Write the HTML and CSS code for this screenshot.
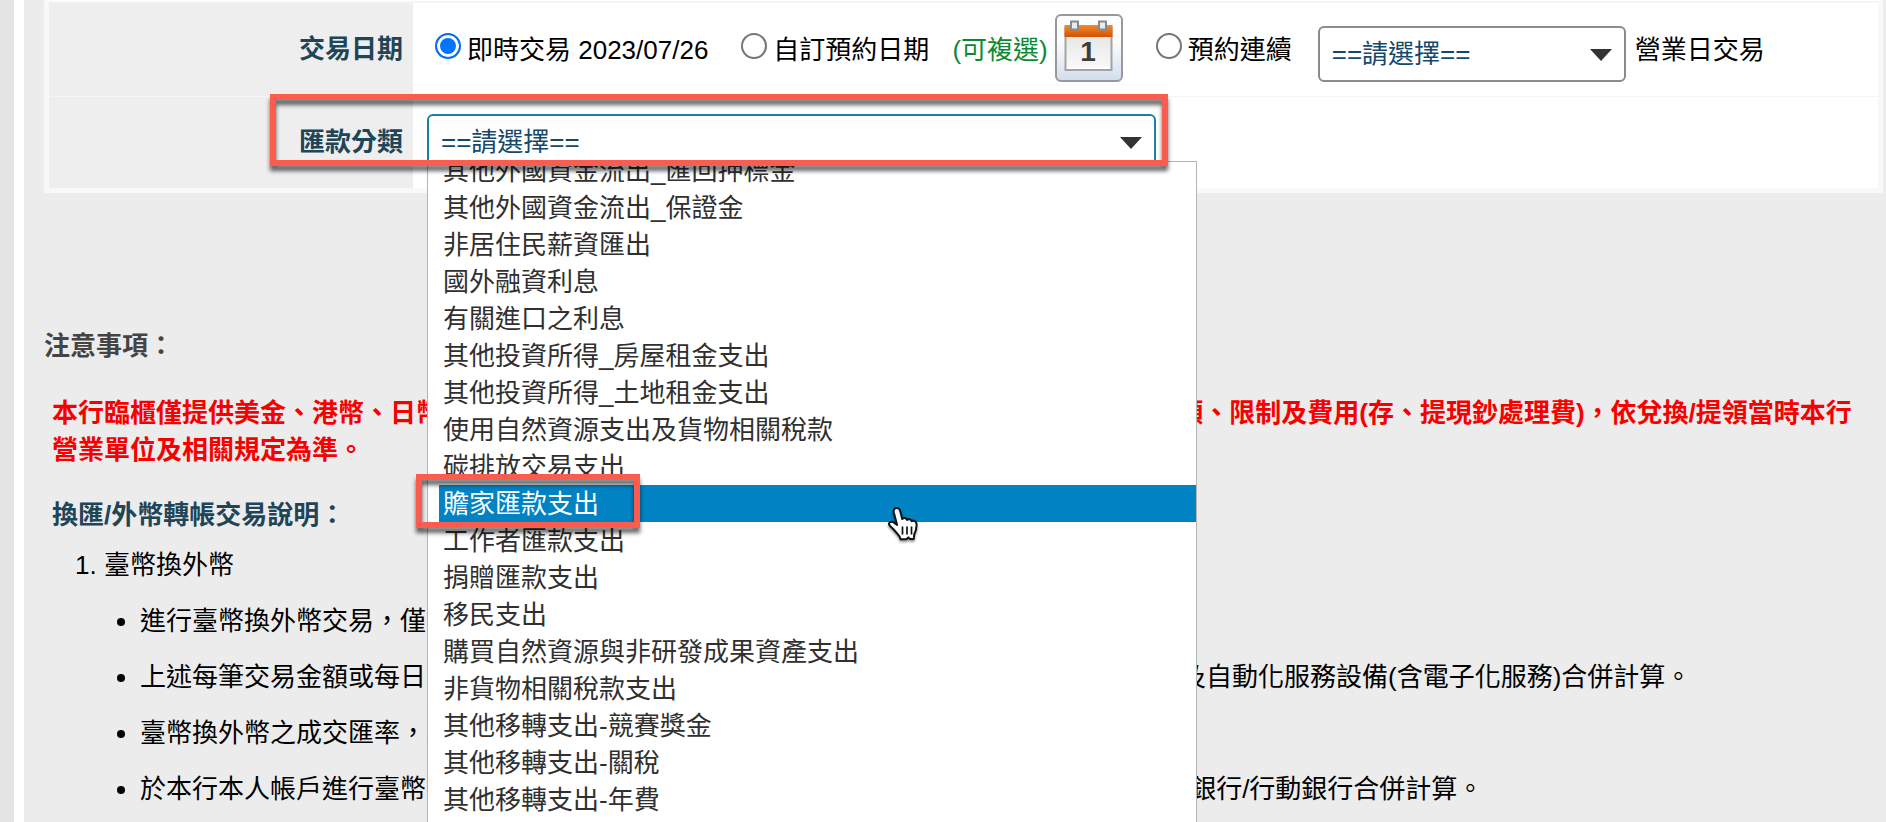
FILE: index.html
```html
<!DOCTYPE html>
<html lang="zh-Hant">
<head>
  <meta charset="UTF-8">
  <meta name="viewport" content="width=device-width, initial-scale=1.0">
  <title>外幣轉帳交易</title>
  <link rel="stylesheet" href="styles.css">
</head>
<body>

  <main class="page">
    <!-- 交易表單 -->
    <form class="trade-form">
      <div class="form-row">
        <div class="row-title">交易日期</div>
        <div class="row-content">
          <div class="date-options">
            <label class="option"><input type="radio" name="tradeDate" checked>即時交易 2023/07/26</label>
            <div class="custom-date">
              <label class="option"><input type="radio" name="tradeDate">自訂預約日期</label>
              <span class="hint">(可複選)</span>
              <button type="button" class="calendar-button" aria-label="選擇日期">
                <svg width="49" height="52" viewBox="0 0 49 52">
                  <defs>
                    <linearGradient id="calTop" x1="0" y1="0" x2="0" y2="1">
                      <stop offset="0" stop-color="#f08a2c"/>
                      <stop offset="1" stop-color="#d45200"/>
                    </linearGradient>
                    <linearGradient id="calPage" x1="0" y1="0" x2="0" y2="1">
                      <stop offset="0" stop-color="#e3e3e3"/>
                      <stop offset="1" stop-color="#fafafa"/>
                    </linearGradient>
                  </defs>
                  <rect x="1.5" y="8" width="46" height="42" fill="url(#calPage)" stroke="#a3a3a6" stroke-width="2"/>
                  <path d="M0.5 5h48v12h-48z" fill="url(#calTop)"/>
                  <path d="M3 48h43" stroke="#fff" stroke-width="1.5"/>
                  <rect x="7" y="1.5" width="7" height="8" fill="#e8eaec" stroke="#85888c" stroke-width="2"/>
                  <rect x="35" y="1.5" width="7" height="8" fill="#e8eaec" stroke="#85888c" stroke-width="2"/>
                  <text class="calendar-day" x="24" y="41" text-anchor="middle">1</text>
                </svg>
              </button>
            </div>
            <div class="repeat-date">
              <label class="option"><input type="radio" name="tradeDate">預約連續</label>
              <div class="select-box select-days">
                <select aria-label="營業日數"><option>==請選擇==</option></select>
              </div>
              <span class="unit">營業日交易</span>
            </div>
          </div>
        </div>
      </div>

      <div class="form-row">
        <label class="row-title" for="category">匯款分類</label>
        <div class="row-content">
          <div class="select-box select-category">
            <select id="category"><option>==請選擇==</option></select>

            <!-- 展開的分類選單 -->
            <div class="dropdown">
              <ul role="listbox" aria-label="匯款分類">
                <li role="option">其他外國資金流出_匯回押標金</li>
                <li role="option">其他外國資金流出_保證金</li>
                <li role="option">非居住民薪資匯出</li>
                <li role="option">國外融資利息</li>
                <li role="option">有關進口之利息</li>
                <li role="option">其他投資所得_房屋租金支出</li>
                <li role="option">其他投資所得_土地租金支出</li>
                <li role="option">使用自然資源支出及貨物相關稅款</li>
                <li role="option">碳排放交易支出</li>
                <li role="option" class="active" aria-selected="true">贍家匯款支出</li>
                <li role="option">工作者匯款支出</li>
                <li role="option">捐贈匯款支出</li>
                <li role="option">移民支出</li>
                <li role="option">購買自然資源與非研發成果資產支出</li>
                <li role="option">非貨物相關稅款支出</li>
                <li role="option">其他移轉支出-競賽獎金</li>
                <li role="option">其他移轉支出-關稅</li>
                <li role="option">其他移轉支出-年費</li>
              </ul>
            </div>
          </div>
        </div>
      </div>
    </form>

    <!-- 注意事項 -->
    <section class="notes">
      <h2>注意事項：</h2>
      <div class="notes-body">
        <p class="warning">本行臨櫃僅提供美金、港幣、日幣、人民幣、歐元等外幣現鈔兌換/提領服務，其相關幣別、可提金額、限制及費用(存、提現鈔處理費)，依兌換/提領當時本行營業單位及相關規定為準。</p>
        <h3>換匯/外幣轉帳交易說明：</h3>
        <ol>
          <li>臺幣換外幣
            <ul>
              <li>進行臺幣換外幣交易，僅限本人帳戶間辦理。</li>
              <li>上述每筆交易金額或每日累積交易金額須依主管機關及本行規定辦理，並與臨櫃、網路銀行及自動化服務設備(含電子化服務)合併計算。</li>
              <li>臺幣換外幣之成交匯率，以交易當時本行牌告匯率為準。</li>
              <li>於本行本人帳戶進行臺幣換外幣交易，如於營業時間外或24小時/自動通路進行交易者，網路銀行/行動銀行合併計算。</li>
            </ul>
          </li>
        </ol>
      </div>
    </section>

    <!-- 標示框與游標 -->
    <div class="mark mark-category"></div>
    <div class="mark mark-option"></div>
    <svg class="pointer" width="36" height="38" viewBox="0 0 36 38">
      <path d="M10 3.500c2.300-1.300 4.600 0 5.200 2.500l2 8c1.300-1.600 4-1.200 4.800.9 1.500-1.400 4-.8 4.700 1.200 2-1.200 4.600.1 4.800 2.600.4 4.300-.5 7-2.300 10.800l-.4 4.500h-3.700l-1.700-1.600-2.100 1.900h-5.800l-.9-2.800c-2.700-3.100-5.400-7.100-9.500-10.600-2.700-2.600.3-5 2.900-3.900l4.100 2.900L8.800 7.500c-.3-1.600-.1-3.100 1.200-4z" fill="#fff" stroke="#111" stroke-width="2" stroke-linejoin="round"/>
      <path d="M17.500 21.500v8M22 21.500v8M26.500 21.500v8" fill="none" stroke="#111" stroke-width="1.700"/>
    </svg>
  </main>

</body>
</html>
```
FILE: styles.css
```css
* {
  box-sizing: border-box;
}

body {
  margin: 0;
  height: 100vh;
  overflow: hidden;
  padding-left: 14px;
  background-color: #e4e4e4;
  color: #000;
  font-family: "Liberation Sans", "Noto Sans CJK TC", sans-serif;
  font-size: 26px;
  line-height: 37px;
}

.page {
  position: relative;
  min-height: 100%;
  padding: 0 3px 0 20px;
  border-left: 10px solid #fff;
  background-color: #ececec;
}

/* 表單 */
.trade-form {
  border: 5px solid #f8f8f8;
  border-top: 1px solid #fff;
  background-color: #fff;
}

.form-row {
  display: flex;
  border-top: 1px solid #f5f5f5;
}

.form-row:first-child {
  border-top-width: 2px;
}

.row-title {
  display: flex;
  flex: 0 0 364px;
  align-items: center;
  justify-content: flex-end;
  padding-right: 10px;
  background-color: #eee;
  color: #204557;
  font-weight: 600;
}

.row-content {
  flex: 1;
  padding: 17px 14px 18px;
}

.form-row:first-child .row-content {
  padding: 11px 22px 14px;
}

.date-options {
  display: flex;
  gap: 33px;
  white-space: nowrap;
}

.option {
  display: flex;
  align-items: center;
  gap: 6px;
}

.option,
.hint,
.unit {
  padding-top: 4px;
}

.option input {
  appearance: none;
  width: 26px;
  height: 26px;
  margin: 0 0 8px;
  border: 2px solid #767676;
  border-radius: 50%;
  background-color: #fff;
}

.option input:checked {
  border-color: #0a6cf5;
  background-color: #0075ff;
  box-shadow: inset 0 0 0 3px #fff;
}

.custom-date {
  display: flex;
  align-items: center;
  gap: 7px;
}

.hint {
  margin-left: 16px;
  color: #0b8a35;
}

.calendar-button {
  display: flex;
  align-items: center;
  justify-content: center;
  width: 68px;
  height: 68px;
  padding: 0 0 4px;
  border: 2px solid #98989d;
  border-radius: 6px;
  background: linear-gradient(#fdfdfd 40%, #d3deec);
}

.calendar-day {
  fill: #3d3d3d;
  font: bold 28px "Liberation Sans", sans-serif;
}

.repeat-date {
  display: flex;
  align-items: center;
  gap: 9px;
}

/* 下拉選單 */
.select-box {
  position: relative;
}

.select-box select {
  appearance: none;
  display: block;
  width: 100%;
  height: 56px;
  padding: 0 12px;
  border: 2px solid #8b8b8b;
  border-radius: 6px;
  background-color: #fff;
  color: #14496b;
  font: inherit;
}

.select-box::after {
  content: "";
  position: absolute;
  top: 23px;
  right: 14px;
  border: 11px solid transparent;
  border-top: 12px solid #333;
  border-bottom: 0;
  pointer-events: none;
}

.select-days {
  align-self: flex-end;
  width: 308px;
  margin-left: 17px;
}

.select-category {
  max-width: 729px;
}

.select-category select {
  border-color: #1f7fa0;
}

.dropdown {
  position: absolute;
  top: 47px;
  left: 0;
  z-index: 1;
  width: 770px;
  overflow: hidden;
  border: 1px solid #b4b4b4;
  background-color: #fff;
}

.dropdown ul {
  margin: -10px 0 0;
  padding: 0 0 37px 11px;
  list-style: none;
}

.dropdown li {
  padding: 2px 0 0 4px;
  color: #303030;
  line-height: 35px;
  white-space: nowrap;
}

.dropdown .active {
  background-color: #0082c3;
  color: #fff;
}

/* 注意事項 */
.notes {
  margin-top: 135px;
}

.notes h2,
.notes h3 {
  margin: 0;
  font-size: 26px;
  font-weight: 600;
}

.notes h2 {
  color: #444;
}

.notes h3 {
  margin-top: 28px;
  color: #204557;
}

.notes-body {
  padding: 0 20px 0 8px;
}

.warning {
  margin: 30px 0 0;
  color: #f80000;
  font-weight: 600;
}

.notes ol {
  margin: 13px 0 0;
  padding-left: 52px;
}

.notes ul {
  margin: 0;
  padding-left: 36px;
  list-style: disc;
}

.notes ul li {
  margin-top: 19px;
}

/* 紅色標示框 */
.mark {
  position: absolute;
  z-index: 2;
  border: 6px solid #fb5c50;
  filter: drop-shadow(0 5px 2px rgba(0, 0, 0, 0.6));
  pointer-events: none;
}

.mark-category {
  top: 94px;
  left: 246px;
  width: 898px;
  height: 72px;
}

.mark-option {
  top: 474px;
  left: 392px;
  width: 224px;
  height: 54px;
}

.pointer {
  position: absolute;
  top: 505px;
  left: 861px;
  z-index: 2;
  filter: drop-shadow(0 2px 1px rgba(0, 0, 0, 0.4));
}
```
